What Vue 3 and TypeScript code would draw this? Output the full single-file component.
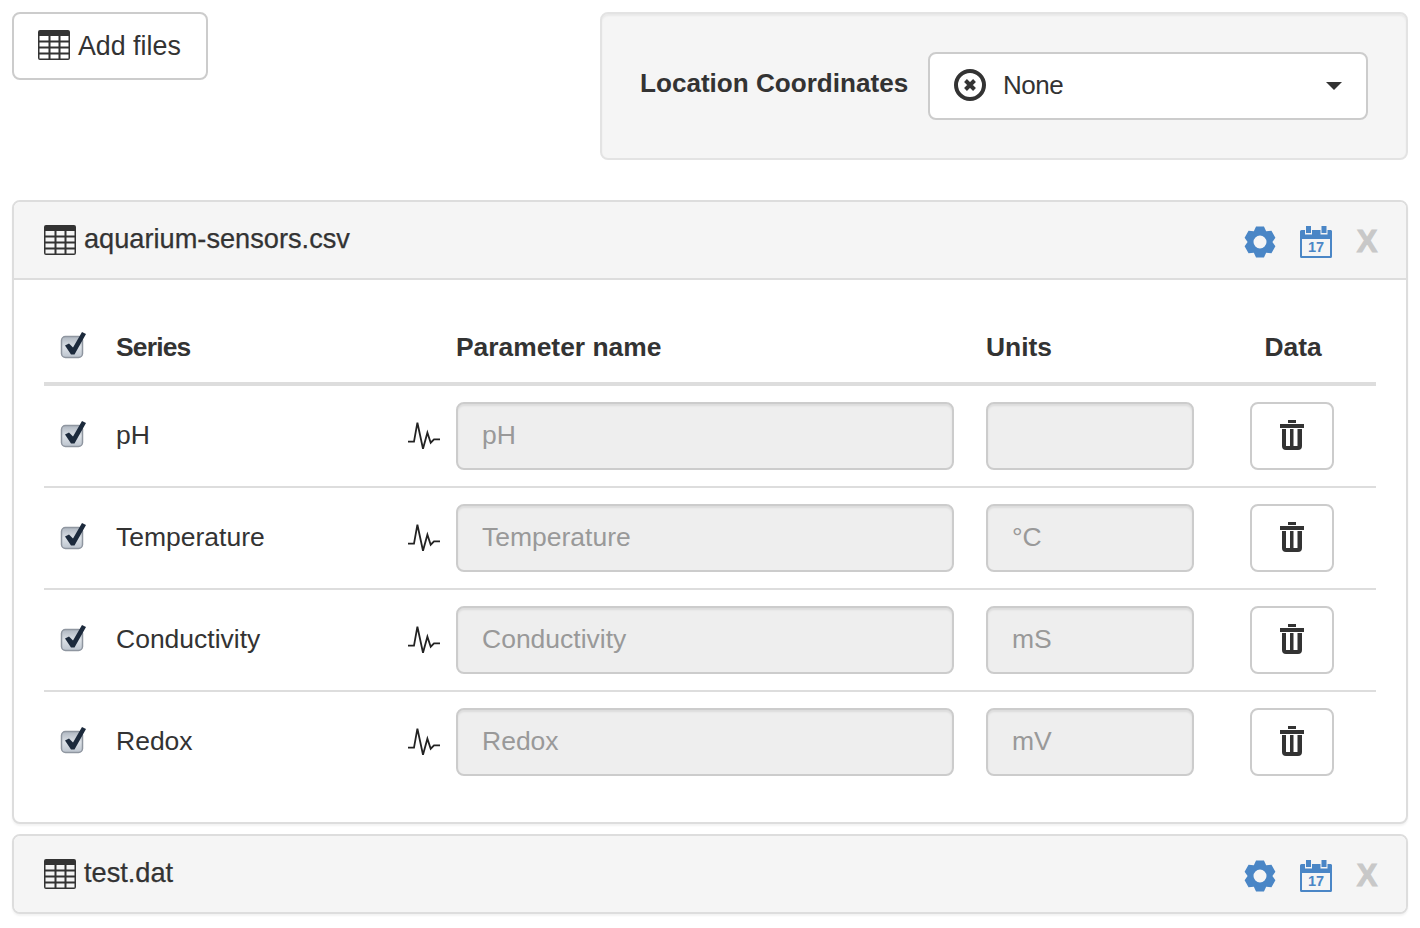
<script setup lang="ts">
interface Series {
  name: string
  units: string
}

const series: Series[] = [
  { name: 'pH', units: '' },
  { name: 'Temperature', units: '°C' },
  { name: 'Conductivity', units: 'mS' },
  { name: 'Redox', units: 'mV' },
]

// six tooth cog, r is the tip radius
function cogPath(cx: number, cy: number, r: number, root: number, hole: number) {
  const pts: string[] = []
  for (let i = 0; i < 6; i++) {
    const a = (Math.PI / 3) * i - Math.PI / 2
    for (const [rad, off] of [[root, -0.52], [r, -0.25], [r, 0.25], [root, 0.52]]) {
      const x = cx + rad * Math.cos(a + off)
      const y = cy + rad * Math.sin(a + off)
      pts.push(`${x.toFixed(2)} ${y.toFixed(2)}`)
    }
  }
  return `M${pts.join('L')}Z M${cx - hole} ${cy}a${hole} ${hole} 0 1 0 ${hole * 2} 0a${hole} ${hole} 0 1 0 ${-hole * 2} 0Z`
}

const cog = cogPath(16, 16, 16, 12.4, 6.5)
</script>

<template>
  <svg class="sprite" width="0" height="0" aria-hidden="true">
    <defs>
      <linearGradient id="box" x1="0" y1="0" x2="0" y2="1">
        <stop offset="0" stop-color="#aeb6c0" />
        <stop offset="0.5" stop-color="#dde2e8" />
        <stop offset="1" stop-color="#bcc4ce" />
      </linearGradient>
      <symbol id="table" viewBox="0 0 32 30">
        <path
          fill-rule="evenodd"
          d="M2 0h28a2 2 0 0 1 2 2v26a2 2 0 0 1-2 2H2a2 2 0 0 1-2-2V2a2 2 0 0 1 2-2ZM1.500 6v4.500h9V6ZM12.500 6v4.500h8V6ZM22.500 6v4.500h8V6ZM1.500 12.500v4h9v-4ZM12.500 12.500v4h8v-4ZM22.500 12.500v4h8v-4ZM1.500 18.500v4h9v-4ZM12.500 18.500v4h8v-4ZM22.500 18.500v4h8v-4ZM1.500 24.500v4h9v-4ZM12.500 24.500v4h8v-4ZM22.500 24.500v4h8v-4Z"
          fill="#333"
        />
      </symbol>
      <symbol id="check" viewBox="0 0 26 28">
        <rect x="1.500" y="5.500" width="21" height="21" rx="4" fill="url(#box)" stroke="#8f96a0" stroke-width="1.500" />
        <path d="M5 14.500 9 12.500 13 16.500 22 1 26 3 14.500 23.500H11Z" fill="#1c2a3c" />
      </symbol>
      <symbol id="pulse" viewBox="0 0 32 28">
        <path d="M0 20.700H6L9.400 1.700 15 27.700 19.400 11.700 22.700 21.700 26 18.300H32" fill="none" stroke="#222" stroke-width="1.800" />
      </symbol>
      <symbol id="trash" viewBox="0 0 24 30">
        <path
          fill-rule="evenodd"
          d="M8 0h8v3H8ZM0 4h24v4H0ZM2 9h20v17a4 4 0 0 1-4 4H6a4 4 0 0 1-4-4ZM6 9v17h4V9ZM13.500 9v17h4V9Z"
          fill="#333"
        />
      </symbol>
      <symbol id="cog" viewBox="0 0 32 32">
        <path fill-rule="evenodd" :d="cog" fill="#4a86c6" />
      </symbol>
      <symbol id="calendar" viewBox="0 0 32 32">
        <path
          fill-rule="evenodd"
          d="M6 0h5v7H6ZM21.500 0h5v7h-5ZM1.500 4H5v4.500h7V4h8.500v4.500h7V4h2.500A1.500 1.500 0 0 1 32 5.500v25a1.500 1.500 0 0 1-1.500 1.500h-29A1.500 1.500 0 0 1 0 30.500v-25A1.500 1.500 0 0 1 1.500 4ZM2 13v17h28V13Z"
          fill="#4a86c6"
        />
      </symbol>
    </defs>
  </svg>

  <div class="page">
    <div class="top">
      <button class="btn add-files" type="button">
        <svg class="ico-table"><use href="#table" /></svg>
        Add files
      </button>
      <div class="well">
        <label class="well-label">Location Coordinates</label>
        <div class="select">
          <svg class="ico-none" viewBox="0 0 32 32">
            <circle cx="16" cy="16" r="14" fill="none" stroke="#333" stroke-width="4" />
            <path d="M11.500 11.500l9 9M20.500 11.500l-9 9" stroke="#333" stroke-width="4" />
          </svg>
          <span class="select-text">None</span>
          <span class="caret"></span>
        </div>
      </div>
    </div>

    <section class="panel">
      <header class="panel-heading">
        <svg class="ico-table"><use href="#table" /></svg>
        <span class="file-name">aquarium-sensors.csv</span>
        <span class="actions">
          <svg class="ico-cog"><use href="#cog" /></svg>
          <span class="cal">
            <svg class="ico-cal"><use href="#calendar" /></svg>
            <span class="cal-day">17</span>
          </span>
          <span class="close">X</span>
        </span>
      </header>
      <div class="panel-body">
        <div class="row head">
          <div class="cell-check"><svg class="ico-check"><use href="#check" /></svg></div>
          <div class="head-series">Series</div>
          <div>Parameter name</div>
          <div>Units</div>
          <div class="data-head">Data</div>
        </div>
        <div v-for="s in series" :key="s.name" class="row">
          <div class="cell-check"><svg class="ico-check"><use href="#check" /></svg></div>
          <div class="cell-name">
            <span>{{ s.name }}</span>
            <svg class="ico-pulse"><use href="#pulse" /></svg>
          </div>
          <div><input class="field name-field" type="text" :placeholder="s.name" disabled /></div>
          <div><input class="field units-field" type="text" :placeholder="s.units" disabled /></div>
          <div>
            <button class="btn trash" type="button">
              <svg class="ico-trash"><use href="#trash" /></svg>
            </button>
          </div>
        </div>
      </div>
    </section>

    <section class="panel">
      <header class="panel-heading last">
        <svg class="ico-table"><use href="#table" /></svg>
        <span class="file-name">test.dat</span>
        <span class="actions">
          <svg class="ico-cog"><use href="#cog" /></svg>
          <span class="cal">
            <svg class="ico-cal"><use href="#calendar" /></svg>
            <span class="cal-day">17</span>
          </span>
          <span class="close">X</span>
        </span>
      </header>
    </section>
  </div>
</template>

<style scoped>
.sprite {
  display: block;
}

.page {
  padding: 12px;
  font-family: "Liberation Sans", Arial, sans-serif;
  font-size: 26.5px;
  color: #333;
}

.top {
  display: flex;
  justify-content: space-between;
  align-items: flex-start;
  margin-bottom: 40px;
}

.btn {
  display: inline-flex;
  align-items: center;
  justify-content: center;
  height: 68px;
  background: #fff;
  border: 2px solid #ccc;
  border-radius: 8px;
  font: inherit;
  color: #333;
  padding: 0;
}

.add-files {
  width: 196px;
  justify-content: flex-start;
  gap: 8px;
  padding-left: 24px;
  font-size: 26.800px;
}

.add-files .ico-table {
  margin-top: -2px;
}

.ico-table {
  width: 32px;
  height: 30px;
  flex: none;
}

.well {
  box-sizing: border-box;
  width: 808px;
  height: 148px;
  display: flex;
  align-items: center;
  padding: 0 38px;
  background: #f5f5f5;
  border: 2px solid #e3e3e3;
  border-radius: 8px;
  box-shadow: inset 0 2px 2px rgba(0, 0, 0, 0.05);
}

.well-label {
  font-weight: bold;
  font-size: 26.100px;
  width: 288px;
  flex: none;
  margin-top: -6px;
}

.select {
  box-sizing: border-box;
  flex: 1;
  height: 68px;
  display: flex;
  align-items: center;
  padding: 0 24px;
  background: #fff;
  border: 2px solid #ccc;
  border-radius: 8px;
}

.ico-none {
  width: 32px;
  height: 32px;
  flex: none;
  margin-top: -2px;
}

.select-text {
  margin-left: 17px;
  margin-top: -1px;
  font-size: 26px;
  letter-spacing: -0.5px;
}

.caret {
  margin-left: auto;
  border-top: 8px solid #333;
  border-left: 8px solid transparent;
  border-right: 8px solid transparent;
}

.panel {
  box-sizing: border-box;
  background: #fff;
  border: 2px solid #ddd;
  border-radius: 8px;
  box-shadow: 0 2px 2px rgba(0, 0, 0, 0.05);
  margin-bottom: 10px;
}

.panel-heading {
  box-sizing: border-box;
  height: 78px;
  display: flex;
  align-items: center;
  gap: 8px;
  padding: 0 27px 0 30px;
  background: #f5f5f5;
  border-bottom: 2px solid #ddd;
  border-radius: 6px 6px 0 0;
}

.panel-heading.last {
  height: 76px;
  border-bottom: 0;
  border-radius: 6px;
}

.file-name {
  font-size: 27.200px;
  margin-top: -2px;
  -webkit-text-stroke: 0.25px #333;
}

.actions {
  margin-left: auto;
  display: flex;
  align-items: center;
  margin-top: 4px;
}

.ico-cog {
  width: 32px;
  height: 32px;
}

.cal {
  position: relative;
  display: block;
  width: 32px;
  height: 32px;
  margin-left: 24px;
}

.ico-cal {
  display: block;
  width: 32px;
  height: 32px;
}

.cal-day {
  position: absolute;
  left: 0;
  right: 0;
  top: 12.500px;
  text-align: center;
  font-size: 14.500px;
  line-height: 16px;
  font-weight: bold;
  color: #4a86c6;
}

.close {
  margin-left: 23px;
  width: 24px;
  text-align: center;
  font-size: 31px;
  line-height: 32px;
  font-weight: bold;
  color: #c8c8c8;
  -webkit-text-stroke: 1px #c8c8c8;
}

.panel-body {
  box-sizing: border-box;
  height: 542px;
  padding: 30px 30px 0;
}

.row {
  box-sizing: border-box;
  display: grid;
  grid-template-columns: 72px 340px 530px 264px 126px;
  align-items: center;
  height: 102px;
  border-bottom: 2px solid #ddd;
}

.row:last-child {
  border-bottom-color: transparent;
}

.row.head {
  height: 76px;
  padding-top: 2px;
  border-bottom: 4px solid #ddd;
  font-weight: bold;
  font-size: 26.400px;
}

.head-series {
  letter-spacing: -0.8px;
}

.cell-check {
  display: flex;
  padding-left: 16px;
}

.ico-check {
  width: 26px;
  height: 28px;
  margin-top: -4px;
}

.cell-name {
  display: flex;
  justify-content: space-between;
  align-items: center;
  padding-right: 16px;
}

.cell-name span {
  margin-top: -1px;
}

.ico-pulse {
  width: 32px;
  height: 28px;
  margin-top: -2px;
}

.field {
  display: block;
  box-sizing: border-box;
  height: 68px;
  padding: 0 24px 2px;
  background: #eee;
  border: 2px solid #ccc;
  border-radius: 8px;
  font: inherit;
  box-shadow: inset 0 2px 2px rgba(0, 0, 0, 0.075);
}

.field::placeholder {
  color: #999;
  opacity: 1;
}

.name-field {
  width: 498px;
}

.units-field {
  width: 208px;
}

.trash {
  width: 84px;
}

.ico-trash {
  width: 24px;
  height: 30px;
  margin-top: -2px;
}

.data-head {
  width: 84px;
  padding-left: 2px;
  box-sizing: border-box;
  text-align: center;
}
</style>
